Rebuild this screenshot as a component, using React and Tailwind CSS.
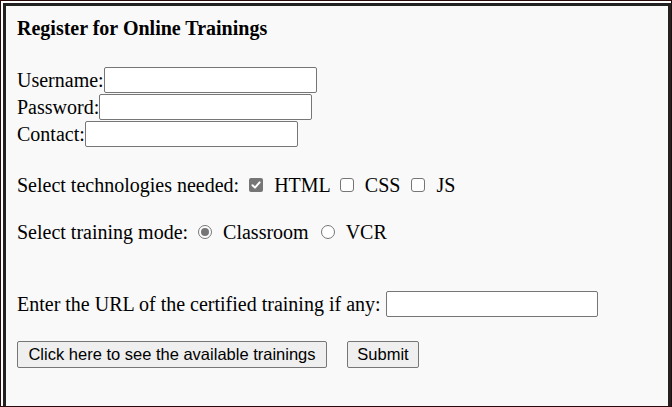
const serif = "font-['Liberation_Serif','Times_New_Roman',serif]";

function Field({ label, className }) {
  return (
    <div className="flex h-[27px] items-start">
      <span className="h-[26px] leading-[26px]">{label}</span>
      <span
        className={`block h-[26px] bg-white border border-[#767676] rounded-[2px] ${className}`}
      />
    </div>
  );
}

function Check({ checked }) {
  if (checked) {
    return (
      <span className="w-[14px] h-[14px] rounded-[2px] bg-[#767676] flex items-center justify-center shrink-0">
        <svg width="10" height="10" viewBox="0 0 10 10">
          <path
            d="M1.5 5.2 L4 7.6 L8.6 2.4"
            stroke="#fff"
            strokeWidth="2"
            fill="none"
            strokeLinecap="round"
            strokeLinejoin="round"
          />
        </svg>
      </span>
    );
  }
  return (
    <span className="block w-[14px] h-[14px] rounded-[3px] bg-white border border-[#767676] shrink-0" />
  );
}

function Radio({ checked }) {
  return (
    <span className="w-[14px] h-[14px] rounded-full bg-white border border-[#767676] flex items-center justify-center shrink-0">
      {checked && <span className="block w-[8px] h-[8px] rounded-full bg-[#767676]" />}
    </span>
  );
}

export default function App() {
  return (
    <div className="w-[672px] h-[407px] overflow-hidden bg-white border border-[#2a0a0a] pl-[2px] pt-[2px]">
      <div
        className={`h-[420px] bg-[#f9f9f9] border-[3px] border-b-0 border-[#222] pl-[11px] pt-[11px] text-[20px] text-black ${serif}`}
      >
        <div className="h-[23px] leading-[23px] font-bold">
          Register for Online Trainings
        </div>

        <div className="mt-[27px]">
          <Field label="Username:" className="w-[213px]" />
          <Field label="Password:" className="w-[213px]" />
          <Field label="Contact:" className="w-[213px]" />
        </div>

        {/* technologies */}
        <div className="mt-[23px] h-[27px] flex items-center">
          <span>Select technologies needed:</span>
          <span className="ml-[10px] flex">
            <Check checked />
          </span>
          <span className="ml-[11px]">HTML</span>
          <span className="ml-[9px] flex">
            <Check />
          </span>
          <span className="ml-[11px]">CSS</span>
          <span className="ml-[11px] flex">
            <Check />
          </span>
          <span className="ml-[11px]">JS</span>
        </div>

        {/* training mode */}
        <div className="mt-[20px] h-[27px] flex items-center">
          <span>Select training mode:</span>
          <span className="ml-[10px] flex">
            <Radio checked />
          </span>
          <span className="ml-[11px]">Classroom</span>
          <span className="ml-[12px] flex">
            <Radio />
          </span>
          <span className="ml-[11px]">VCR</span>
        </div>

        <div className="mt-[46px] h-[26px] flex items-center">
          <span>Enter the URL of the certified training if any:</span>
          <span className="block ml-[5px] w-[212px] h-[26px] bg-white border border-[#767676] rounded-[2px]" />
        </div>

        <div className="mt-[24px] flex gap-[20px] font-['Liberation_Sans',Arial,sans-serif] text-[16.5px]">
          <button className="w-[310px] h-[27px] bg-[#efefef] border border-[#767676] rounded-[2px] text-black">
            Click here to see the available trainings
          </button>
          <button className="w-[72px] h-[27px] bg-[#efefef] border border-[#767676] rounded-[2px] text-black">
            Submit
          </button>
        </div>
      </div>
    </div>
  );
}
